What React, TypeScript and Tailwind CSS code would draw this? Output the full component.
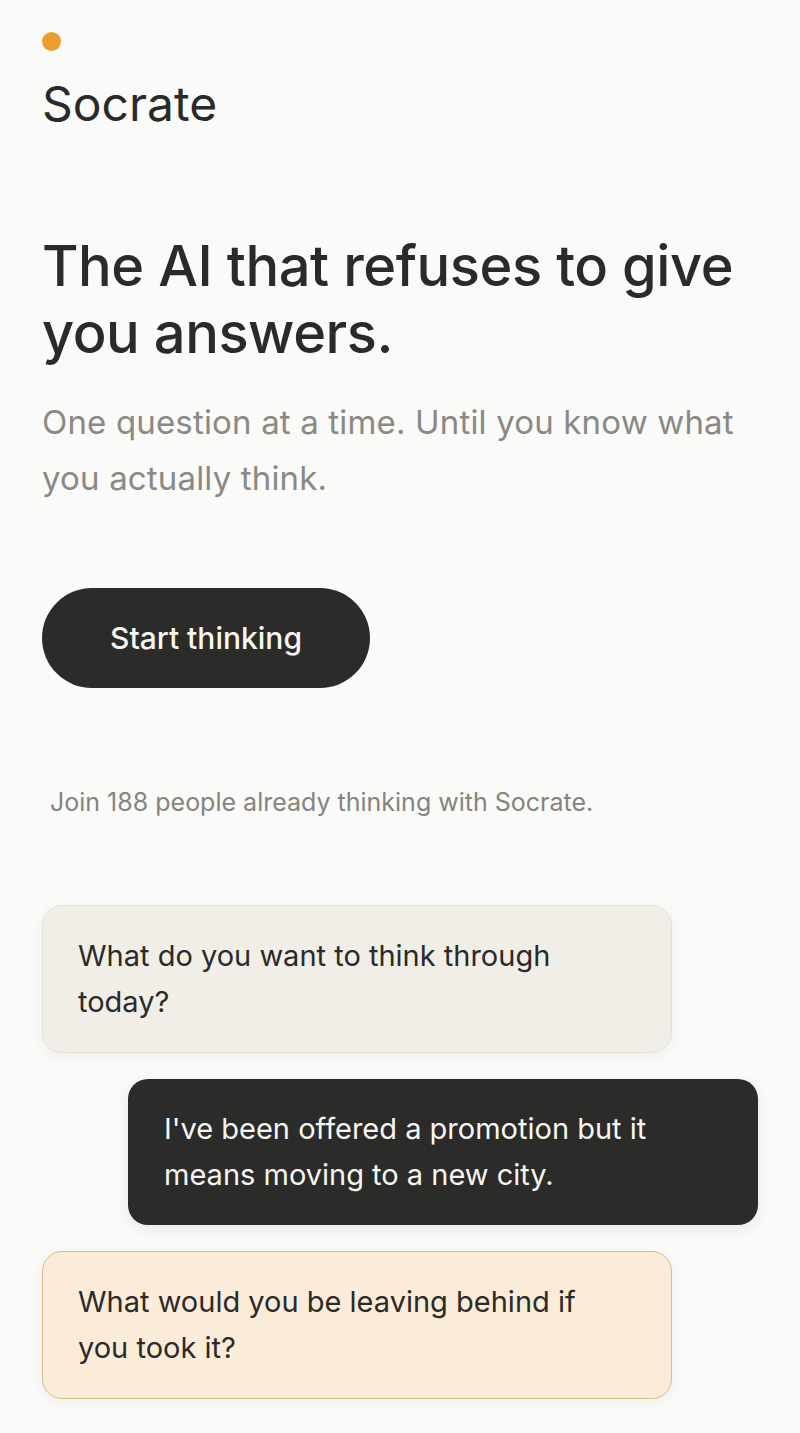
export default function App() {
  return (
    <div className="min-h-screen bg-[#fafaf8] text-[#2a2a28]" style={{ fontFamily: "Inter, 'Noto Sans', sans-serif" }}>
      <div className="flex flex-col px-[42px] pt-[32px] pb-8">
        <div className="w-[19px] h-[19px] rounded-full bg-[#ec9d2f]" />
        <div className="mt-[25px] text-[48px] leading-[56px]">Socrate</div>

        <h1 className="mt-[101px] text-[56px] leading-[67px] font-medium tracking-[-0.008em]">
          The AI that refuses to give you answers.
        </h1>
        <p className="mt-[27px] text-[33px] leading-[56px] text-[#8a8984] tracking-[0.005em]">
          One question at a time. Until you know what you actually think.
        </p>

        <button className="mt-[82px] w-[328px] h-[100px] rounded-full bg-[#2b2b29] text-[#f7f6f2] text-[30px] font-medium">
          Start thinking
        </button>

        <p className="mt-[96px] pl-2 text-[25px] text-[#85847f]">
          Join 188 people already thinking with Socrate.
        </p>

        <div className="mt-[83px] flex flex-col gap-[26px]">
          <div className="w-[630px] rounded-[20px] border border-[#e4e1d9] bg-[#f1eee7] pl-[35px] pr-[48px] py-[27px] text-[29px] leading-[46px] shadow-[0_4px_14px_rgba(0,0,0,0.05)]">
            What do you want to think through today?
          </div>
          <div className="self-end w-[630px] rounded-[20px] bg-[#2b2b29] pl-[36px] pr-[48px] py-[27px] text-[29px] leading-[46px] text-[#f7f6f2] shadow-[0_4px_14px_rgba(0,0,0,0.08)]">
            I've been offered a promotion but it means moving to a new city.
          </div>
          <div className="w-[630px] rounded-[20px] border border-[#d6bd8e] bg-[#faecd9] pl-[35px] pr-[48px] py-[27px] text-[29px] leading-[46px] shadow-[0_4px_14px_rgba(0,0,0,0.05)]">
            What would you be leaving behind if you took it?
          </div>
        </div>
      </div>
    </div>
  );
}
